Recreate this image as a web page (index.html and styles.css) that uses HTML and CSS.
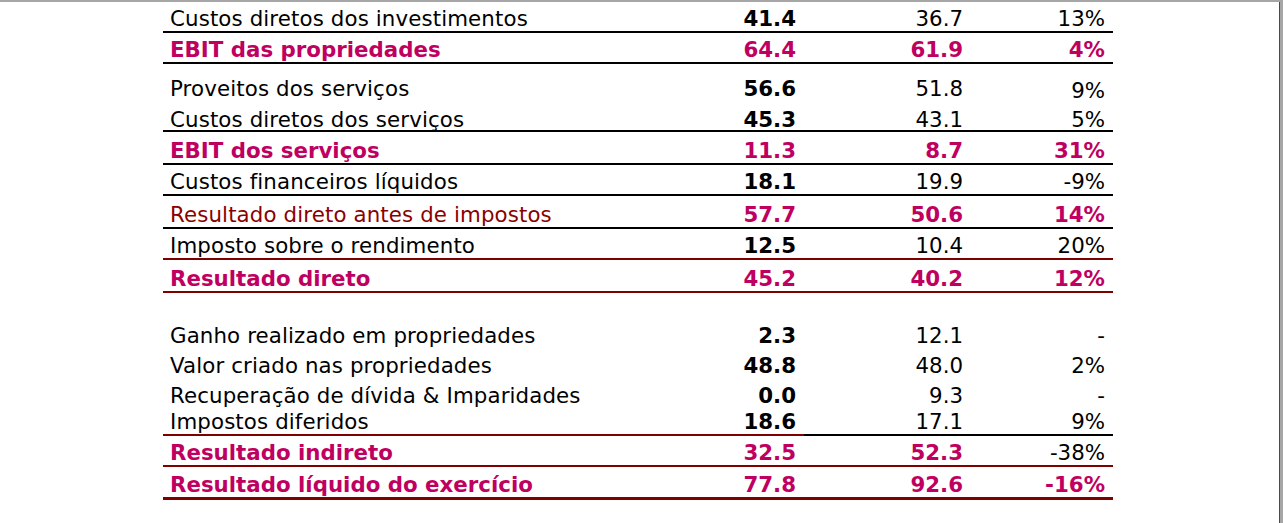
FILE: index.html
```html
<!DOCTYPE html>
<html lang="pt">
<head>
<meta charset="utf-8">
<title>Demonstração de resultados</title>
<link rel="stylesheet" href="styles.css">
</head>
<body>
<div class="viewer">
  <div class="page">
    <div class="sheet">
      <div class="row h29 line-bk">
        <div class="lbl">Custos diretos dos investimentos</div>
        <div class="num b">41.4</div><div class="num">36.7</div><div class="num">13%</div>
      </div>
      <div class="row h29 line-bk total">
        <div class="lbl">EBIT das propriedades</div>
        <div class="num">64.4</div><div class="num">61.9</div><div class="num">4%</div>
      </div>
      <div class="row h37">
        <div class="lbl">Proveitos dos serviços</div>
        <div class="num b">56.6</div><div class="num">51.8</div><div class="num low">9%</div>
      </div>
      <div class="row h29 line-bk tight">
        <div class="lbl">Custos diretos dos serviços</div>
        <div class="num b">45.3</div><div class="num">43.1</div><div class="num">5%</div>
      </div>
      <div class="row h31 line-bk total">
        <div class="lbl">EBIT dos serviços</div>
        <div class="num">11.3</div><div class="num">8.7</div><div class="num">31%</div>
      </div>
      <div class="row h29 line-bk">
        <div class="lbl">Custos financeiros líquidos</div>
        <div class="num b">18.1</div><div class="num">19.9</div><div class="num">-9%</div>
      </div>
      <div class="row h31 line-bk">
        <div class="lbl red">Resultado direto antes de impostos</div>
        <div class="num mg">57.7</div><div class="num mg">50.6</div><div class="num mg">14%</div>
      </div>
      <div class="row h29 line-rd">
        <div class="lbl">Imposto sobre o rendimento</div>
        <div class="num b">12.5</div><div class="num">10.4</div><div class="num">20%</div>
      </div>
      <div class="row h31 line-rd total">
        <div class="lbl">Resultado direto</div>
        <div class="num">45.2</div><div class="num">40.2</div><div class="num">12%</div>
      </div>
      <div class="row h55">
        <div class="lbl">Ganho realizado em propriedades</div>
        <div class="num b">2.3</div><div class="num">12.1</div><div class="num">-</div>
      </div>
      <div class="row h30">
        <div class="lbl">Valor criado nas propriedades</div>
        <div class="num b">48.8</div><div class="num">48.0</div><div class="num">2%</div>
      </div>
      <div class="row h30">
        <div class="lbl">Recuperação de dívida &amp; Imparidades</div>
        <div class="num b">0.0</div><div class="num">9.3</div><div class="num">-</div>
      </div>
      <div class="row h28 mixed">
        <div class="lbl c-rd">Impostos diferidos</div>
        <div class="num b c-rd">18.6</div><div class="num c-bk">17.1</div><div class="num c-bk">9%</div>
      </div>
      <div class="row h29 line-rd total">
        <div class="lbl">Resultado indireto</div>
        <div class="num">32.5</div><div class="num">52.3</div><div class="num plain">-38%</div>
      </div>
      <div class="row h30 line-rd3 total">
        <div class="lbl">Resultado líquido do exercício</div>
        <div class="num">77.8</div><div class="num">92.6</div><div class="num">-16%</div>
      </div>
    </div>
  </div>
</div>
</body>
</html>
```

FILE: styles.css
```css
html, body {
  margin: 0;
  padding: 0;
  background: #ffffff;
}

.viewer {
  width: 1283px;
  height: 523px;
  box-sizing: border-box;
  border-top: 2px solid #a6a6a6;
  background: #a6a6a6;
  padding-right: 3px;
  overflow: hidden;
}

.page {
  height: 100%;
  background: #ffffff;
  border-right: 1px solid #4a4a4a;
  overflow: hidden;
}

.sheet {
  margin-left: 163px;
  width: 950px;
  font-family: "DejaVu Sans", Verdana, sans-serif;
  font-size: 21.33px;
  line-height: 20px;
  color: #000000;
}

.row {
  display: grid;
  grid-template-columns: 470px 171px 167px 142px;
}

.row > div {
  display: flex;
  align-items: flex-end;
  padding-bottom: 2px;
  box-sizing: border-box;
  white-space: nowrap;
}

.lbl {
  padding-left: 7px;
  letter-spacing: 0.12px;
}

.num {
  justify-content: flex-end;
  padding-right: 8px;
}

.row.tight > div {
  padding-bottom: 0;
}

.row > .low {
  padding-bottom: 0;
}

.b {
  font-weight: bold;
}

.h26 { height: 26px; }
.h28 { height: 28px; }
.h29 { height: 29px; }
.h30 { height: 30px; }
.h31 { height: 31px; }
.h37 { height: 37px; }
.h55 { height: 55px; }

.line-bk { border-bottom: 2px solid #000000; }
.line-rd { border-bottom: 2px solid #800000; }
.line-rd3 { border-bottom: 3px solid #800000; }

.mixed .c-rd { border-bottom: 2px solid #800000; }
.mixed .c-bk { border-bottom: 2px solid #000000; }

.total {
  color: #bf0060;
  font-weight: bold;
}

.total .lbl {
  letter-spacing: 0;
}

.total .plain {
  color: #000000;
  font-weight: normal;
}

.red {
  color: #8b0000;
}

.mg {
  color: #bf0060;
  font-weight: bold;
}
```
